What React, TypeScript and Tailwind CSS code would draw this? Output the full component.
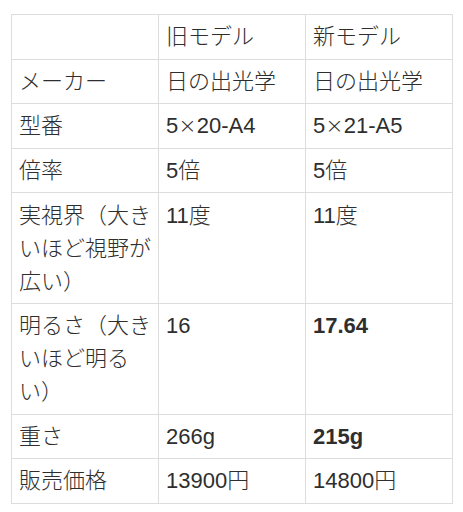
import React from "react";

type Cell = { text: React.ReactNode; bold?: boolean };

const X = () => <span className="font-['DejaVu_Sans',sans-serif] leading-[0]">×</span>;

const rows: Cell[][] = [
  [{ text: "" }, { text: "旧モデル" }, { text: "新モデル" }],
  [{ text: "メーカー" }, { text: "日の出光学" }, { text: "日の出光学" }],
  [
    { text: "型番" },
    { text: <>5<X />20-A4</> },
    { text: <>5<X />21-A5</> },
  ],
  [{ text: "倍率" }, { text: "5倍" }, { text: "5倍" }],
  [{ text: "実視界（大きいほど視野が広い）" }, { text: "11度" }, { text: "11度" }],
  [{ text: "明るさ（大きいほど明るい）" }, { text: "16" }, { text: "17.64", bold: true }],
  [{ text: "重さ" }, { text: "266g" }, { text: "215g", bold: true }],
  [{ text: "販売価格" }, { text: "13900円" }, { text: "14800円" }],
];

export default function App() {
  return (
    <div className="w-[463px] h-[512px] bg-white pt-[14px] pl-[11px] overflow-hidden">
      <table className="w-[441px] table-fixed border-collapse text-[22px] leading-[33px] text-[#2e2e2e] font-['Liberation_Sans','Noto_Sans_CJK_JP',sans-serif]">
        <tbody>
          {rows.map((r, i) => (
            <tr key={i}>
              {r.map((c, j) => (
                <td
                  key={j}
                  className={
                    c.bold
                      ? "w-[147px] border border-[#dddddd] px-[7px] py-[5.3px] align-top break-all font-bold"
                      : "w-[147px] border border-[#dddddd] px-[7px] py-[5.3px] align-top break-all font-light"
                  }
                >
                  {c.text}
                </td>
              ))}
            </tr>
          ))}
        </tbody>
      </table>
    </div>
  );
}
